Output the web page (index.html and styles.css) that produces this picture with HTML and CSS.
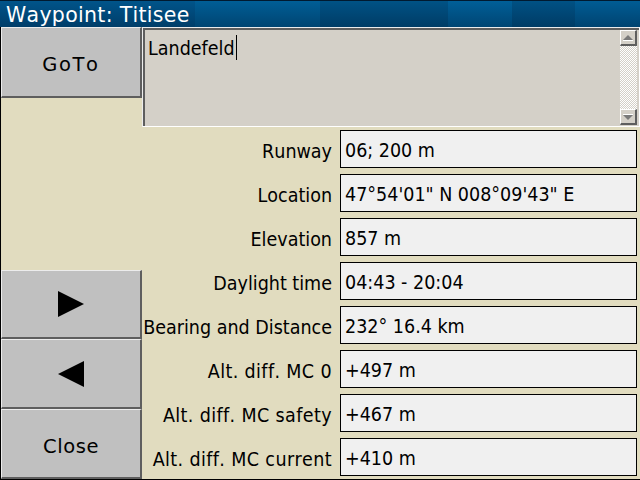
FILE: index.html
```html
<!DOCTYPE html>
<html>
<head>
<meta charset="utf-8">
<link rel="stylesheet" href="styles.css">
</head>
<body>
<div class="window">
  <div class="titlebar"><span class="title">Waypoint: Titisee</span></div>
  <div class="body">
    <div class="side">
      <div class="btn goto"><span>GoTo</span></div>
      <div class="spacer"></div>
      <div class="btn nav1"><svg width="26" height="26" viewBox="0 0 26 26"><polygon points="0,0 26,13 0,26" fill="#000"/></svg></div>
      <div class="btn nav2"><svg width="26" height="26" viewBox="0 0 26 26"><polygon points="26,0 0,13 26,26" fill="#000"/></svg></div>
      <div class="btn close"><span>Close</span></div>
    </div>
    <div class="main">
      <div class="memo">
        <div class="memo-text">Landefeld<span class="caret"></span></div>
        <div class="scrollbar">
          <div class="sb-btn"><svg width="12" height="8" viewBox="0 0 12 8"><polygon points="6,1 11,6 1,6" fill="#7a7a7a"/><line x1="1" y1="6.5" x2="11" y2="6.5" stroke="#fff" stroke-width="1"/></svg></div>
          <div class="sb-track"></div>
          <div class="sb-btn"><svg width="12" height="8" viewBox="0 0 12 8"><polygon points="1,2 11,2 6,7" fill="#7a7a7a"/><line x1="1" y1="1.5" x2="11" y2="1.5" stroke="#fff" stroke-width="1"/></svg></div>
        </div>
      </div>
      <div class="rows">
        <div class="row"><div class="label">Runway</div><div class="value">06; 200 m</div></div>
        <div class="row"><div class="label">Location</div><div class="value">47°54'01" N 008°09'43" E</div></div>
        <div class="row"><div class="label">Elevation</div><div class="value">857 m</div></div>
        <div class="row"><div class="label">Daylight time</div><div class="value">04:43 - 20:04</div></div>
        <div class="row"><div class="label">Bearing and Distance</div><div class="value">232° 16.4 km</div></div>
        <div class="row"><div class="label alt">Alt. diff. MC 0</div><div class="value">+497 m</div></div>
        <div class="row"><div class="label alt">Alt. diff. MC safety</div><div class="value">+467 m</div></div>
        <div class="row"><div class="label alt">Alt. diff. MC current</div><div class="value">+410 m</div></div>
      </div>
    </div>
  </div>
</div>
</body>
</html>
```
FILE: styles.css
```css
* { box-sizing: border-box; }
html, body { margin: 0; padding: 0; background: #000; }
.window {
  width: 640px;
  height: 480px;
  display: flex;
  flex-direction: column;
  font-family: "DejaVu Sans Condensed", "DejaVu Sans", sans-serif;
  font-stretch: condensed;
  font-kerning: none;
  font-variant-ligatures: none;
}
.titlebar {
  height: 27px;
  border-top: 1px solid #001a30;
  background:
    linear-gradient(to bottom, rgba(0,0,0,0) 0%, rgba(0,10,30,0.3) 100%),
    linear-gradient(to right, #00548a 0 195px, #005e96 195px 320px, #005285 320px 448px, #005f98 448px 512px, #005184 512px 575px, #005c94 575px);
  display: flex;
  align-items: center;
  padding-left: 6px;
}
.title {
  color: #fff;
  font-family: "DejaVu Sans", sans-serif;
  font-stretch: normal;
  font-size: 20.5px;
  letter-spacing: 0.3px;
  line-height: 1;
  margin-top: 2px;
}
.body {
  flex: 1;
  display: flex;
  background: #e1dcbf;
  border-left: 1px solid #000;
  border-bottom: 1px solid #000;
}
.side {
  width: 141px;
  display: flex;
  flex-direction: column;
}
.btn {
  background: #c0c0c0;
  border-top: 1px solid #ececec;
  border-left: 1px solid #ececec;
  border-right: 2px solid #5e5e5e;
  border-bottom: 2px solid #5e5e5e;
  display: flex;
  align-items: center;
  justify-content: center;
  font-family: "DejaVu Sans", sans-serif;
  font-stretch: normal;
  font-size: 19.5px;
  color: #000;
}
.btn span { padding-top: 5px; }
.goto span { letter-spacing: 1.6px; }
.close span { letter-spacing: 0.6px; }
.goto { height: 71px; }
.spacer { flex: 1; }
.nav1 { height: 69px; }
.nav2 { height: 70px; }
.close { height: 70px; }
.nav1 svg, .nav2 svg { display: block; }
.main {
  flex: 1;
  display: flex;
  flex-direction: column;
}
.memo {
  height: 100px;
  background: #d4d0c8;
  border-top: 1px solid #ececec;
  border-left: 1px solid #ececec;
  border-right: 1px solid #fff;
  border-bottom: 1px solid #fff;
  box-shadow: inset 2px 2px 0 #5e5e5e;
  display: flex;
  padding: 2px 1px 1px 2px;
}
.memo-text {
  flex: 1;
  font-size: 19.5px;
  padding: 5px 0 0 3px;
  line-height: 1.2;
  color: #000;
}
.caret {
  display: inline-block;
  width: 1px;
  height: 25px;
  background: #000;
  vertical-align: -5px;
  margin-left: 1px;
}
.scrollbar {
  width: 17px;
  display: flex;
  flex-direction: column;
  margin-right: 1px;
}
.sb-btn {
  height: 16px;
  background: #d4d0c8;
  border-top: 1px solid #fff;
  border-left: 1px solid #fff;
  border-right: 2px solid #5e5e5e;
  border-bottom: 2px solid #5e5e5e;
  display: flex;
  align-items: center;
  justify-content: center;
}
.sb-track {
  flex: 1;
  background-color: #fff;
  background-image: repeating-conic-gradient(#d4d0c8 0 25%, #fff 0 50%);
  background-size: 2px 2px;
}
.rows {
  flex: 1;
  display: flex;
  flex-direction: column;
  gap: 6px;
  padding: 3px 3px 0 0;
}
.row {
  height: 38px;
  display: grid;
  grid-template-columns: 1fr 297px;
  column-gap: 8px;
  align-items: center;
}
.label {
  justify-self: end;
  font-size: 19.5px;
  white-space: nowrap;
  color: #000;
  padding-top: 4px;
}
.label.alt { letter-spacing: 0.38px; }
.value {
  height: 38px;
  background: #f0f0f0;
  border: 1px solid #000;
  font-size: 19.5px;
  padding: 3px 0 0 4px;
  display: flex;
  align-items: center;
  white-space: nowrap;
  color: #000;
}
```
